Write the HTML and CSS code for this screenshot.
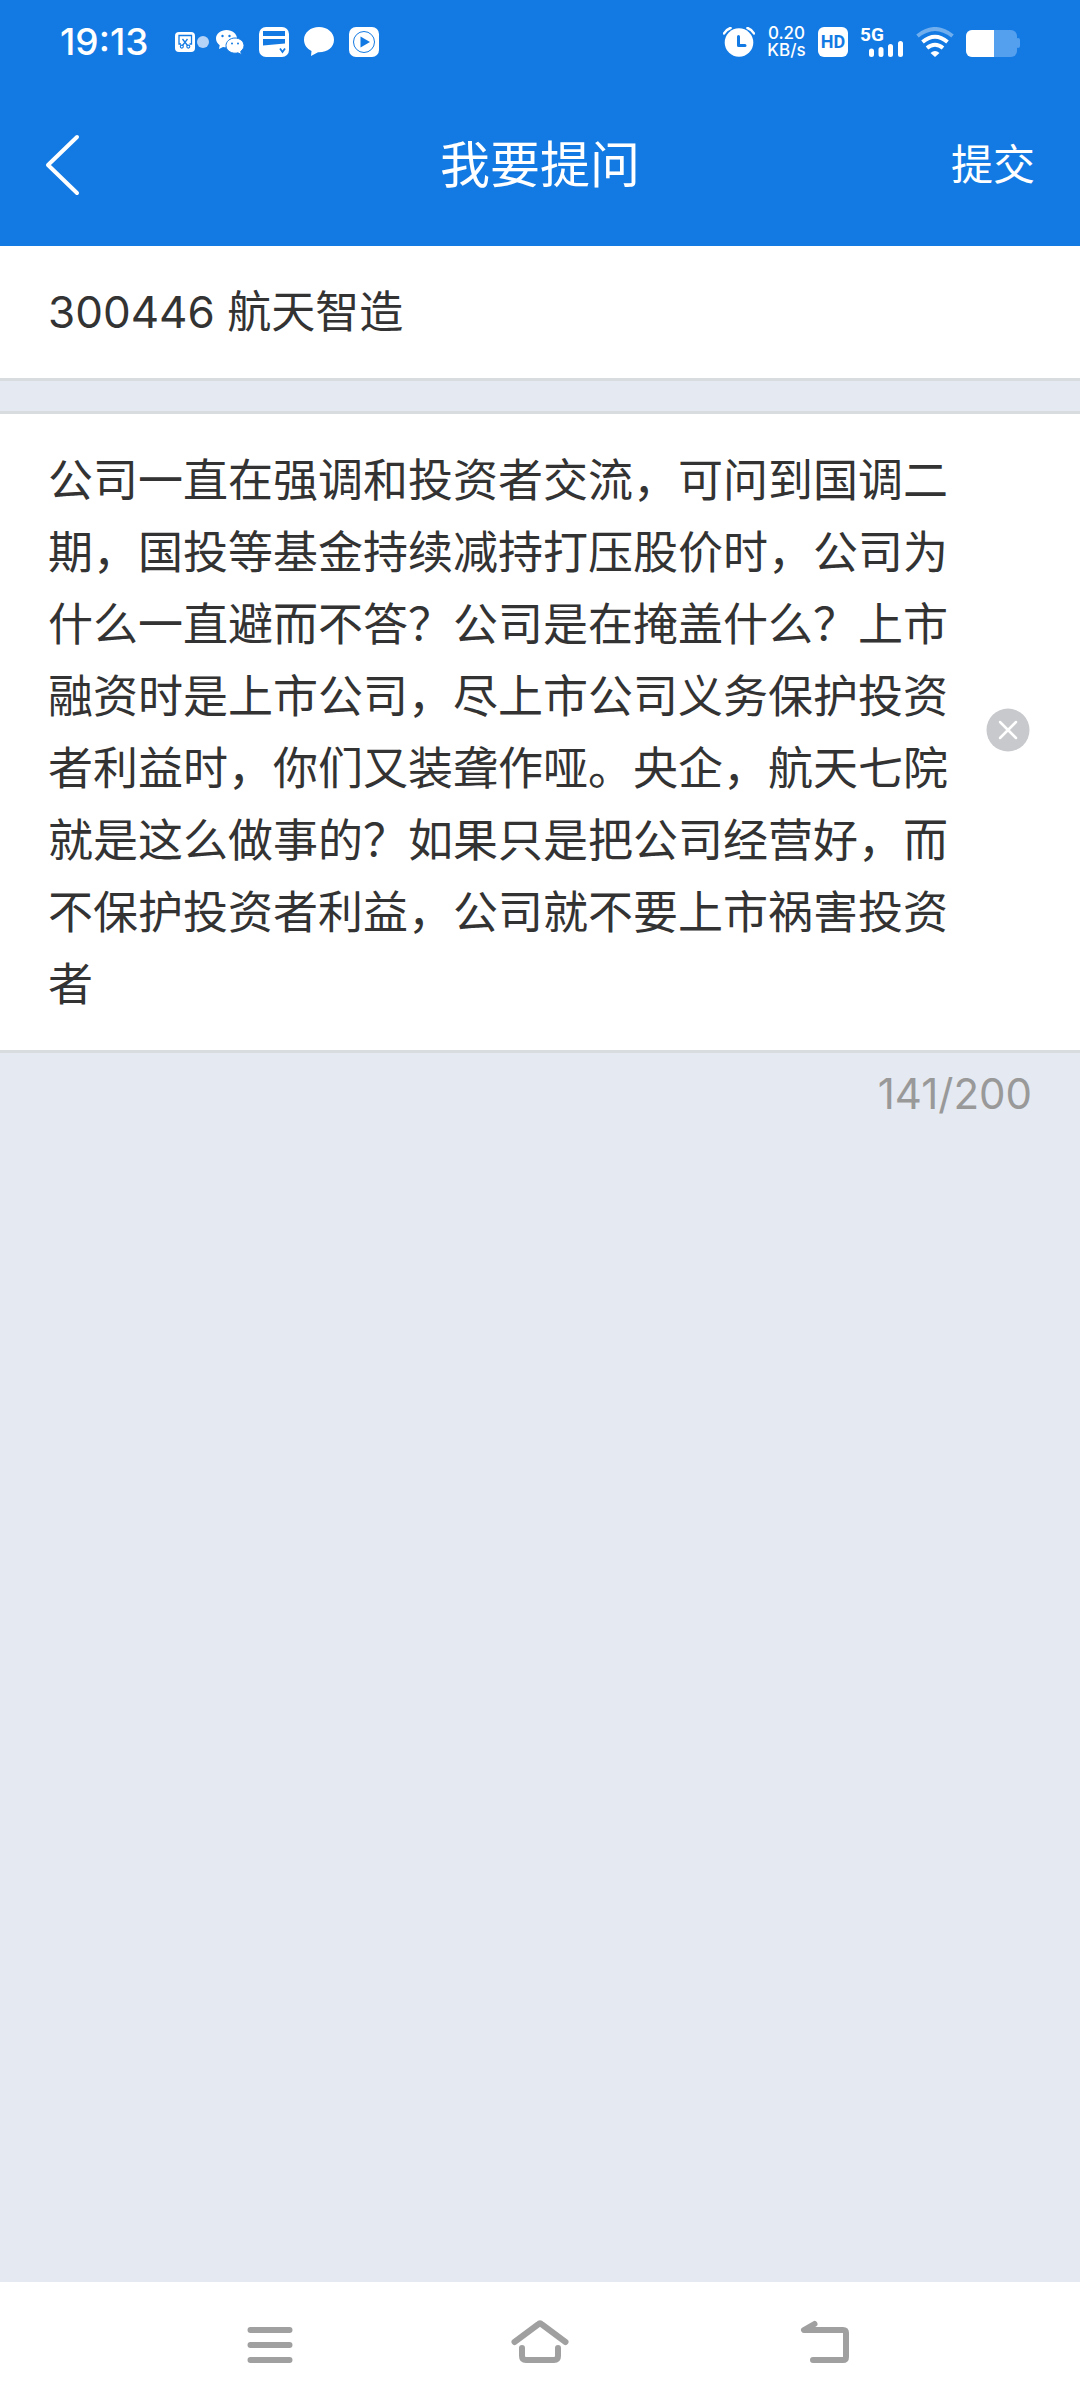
FILE: index.html
```html
<!DOCTYPE html>
<html lang="zh-CN">
<head>
<meta charset="utf-8">
<meta name="viewport" content="width=device-width, initial-scale=1">
<title>我要提问</title>
<link rel="stylesheet" href="styles.css">
</head>
<body>
<div class="screen">
  <div class="status">
    <div class="status-left">
      <span class="time">19:13</span>
      <div class="icon-pair">
        <svg width="34" height="30" viewBox="0 0 34 30" aria-hidden="true">
          <rect x="0" y="5" width="20" height="20" rx="4" fill="#fff"/>
          <path d="M6 17H4V8.500H16.500V17H14.500" fill="none" stroke="#137ae3" stroke-width="1.300"/>
          <path d="M7.500 12l5 6.500M12.500 12l-5 6.500" fill="none" stroke="#137ae3" stroke-width="1.300"/>
          <circle cx="6.800" cy="19.600" r="1.500" fill="none" stroke="#137ae3" stroke-width="1.100"/>
          <circle cx="13.300" cy="19.600" r="1.500" fill="none" stroke="#137ae3" stroke-width="1.100"/>
          <circle cx="28" cy="15" r="6" fill="#b5d3f6"/>
        </svg>
        <svg width="28" height="30" viewBox="0 0 28 30" aria-hidden="true">
          <path d="M10.500 3C4.700 3 0 6.800 0 11.600c0 2.700 1.400 5 3.700 6.600L3 22l4-2.100c1.200.4 2.300.4 3.500.4 5.800 0 10.500-3.900 10.500-8.700S16.300 3 10.500 3z" fill="#fff"/>
          <path d="M19 11c-5 0-9 3.400-9 7.600s4 7.600 9 7.600c1 0 2-.1 2.900-.4l3.600 1.800-.8-3.200c2-1.400 3.300-3.500 3.300-5.800C28 14.400 24 11 19 11z" fill="#fff" stroke="#137ae3" stroke-width="1"/>
          <g fill="#137ae3"><circle cx="6.500" cy="9" r="1.200"/><circle cx="13.500" cy="9" r="1.200"/><circle cx="16" cy="16.500" r="1"/><circle cx="22" cy="16.500" r="1"/></g>
        </svg>
      </div>
      <svg width="30" height="30" viewBox="0 0 30 30" aria-hidden="true">
        <rect width="30" height="30" rx="7" fill="#fff"/>
        <path d="M4 4h22v5H4zM4 12h22v4.500L4 18.500z" fill="#137ae3"/>
        <path d="M21 21.500l2.500 3.500 2.500-3.500" fill="none" stroke="#137ae3" stroke-width="1.800"/>
      </svg>
      <svg width="30" height="30" viewBox="0 0 30 30" aria-hidden="true">
        <path d="M15 0C6.700 0 0 5.500 0 12.700c0 5 3 9 7.500 11.300L7 29l7-3.800C23.300 25.600 30 20.300 30 12.700 30 5.500 23.300 0 15 0z" fill="#fff"/>
      </svg>
      <svg width="30" height="30" viewBox="0 0 30 30" aria-hidden="true">
        <rect width="30" height="30" rx="7" fill="#fff"/>
        <circle cx="15" cy="15" r="10.500" fill="none" stroke="#137ae3" stroke-width="1"/>
        <path d="M11.500 9.500v11l9.500-5.500z" fill="#137ae3"/>
      </svg>
    </div>
    <div class="status-right">
      <svg width="32" height="30" viewBox="0 0 32 30" aria-hidden="true">
        <circle cx="16" cy="15.500" r="14.300" fill="#fff"/>
        <path d="M1 6.500Q3 2.500 7.500 1M31 6.500Q29 2.500 24.500 1" fill="none" stroke="#fff" stroke-width="2.500" stroke-linecap="round"/>
        <path d="M15.500 9.500v9H22" fill="none" stroke="#137ae3" stroke-width="3" stroke-linecap="round" stroke-linejoin="round"/>
      </svg>
      <span class="speed"><span>0.20</span><span>KB/s</span></span>
      <span class="hd">HD</span>
      <svg class="signal" width="44" height="34" viewBox="0 -2 44 34">
        <text x="0" y="14">5G</text>
        <path d="M11.500 24v3.500M21 22.500v5M30.500 19.500v8M40.500 16.500v11" stroke="#fff" stroke-width="5" stroke-linecap="round"/>
      </svg>
      <svg width="38" height="30" viewBox="0 0 38 30" fill="none" aria-hidden="true">
        <path d="M1.500 9Q19-5 36.500 9" stroke="#70aeee" stroke-width="4"/>
        <path d="M6.500 15Q19 4.500 31.500 15" stroke="#fff" stroke-width="4"/>
        <path d="M11 21Q19 14.500 27 21" stroke="#fff" stroke-width="4"/>
        <path d="M14.500 26Q19 22 23.500 26L19 30z" fill="#fff"/>
      </svg>
      <svg width="54" height="30" viewBox="0 0 54 30" aria-hidden="true">
        <rect x="0" y="3" width="51" height="27" rx="6" fill="#549fee"/>
        <rect x="50" y="11" width="4" height="10" rx="2" fill="#549fee"/>
        <path d="M28 3H6a6 6 0 0 0-6 6v15a6 6 0 0 0 6 6h22z" fill="#fff"/>
      </svg>
    </div>
  </div>

  <header class="titlebar">
    <button class="back" type="button" aria-label="返回">
      <svg width="36" height="62" viewBox="0 0 36 62" fill="none" stroke="#fff" stroke-width="4" stroke-linecap="round" stroke-linejoin="round" aria-hidden="true"><path d="M32 3L3 31l29 28"/></svg>
    </button>
    <h1 class="title">我要提问</h1>
    <button class="submit" type="submit" form="ask">提交</button>
  </header>

  <form id="ask" class="form">
    <div class="stock">300446 航天智造</div>
    <div class="question">
      <textarea class="field" rows="8" maxlength="200" aria-label="问题内容" spellcheck="false">公司一直在强调和投资者交流，可问到国调二期，国投等基金持续减持打压股价时，公司为什么一直避而不答？公司是在掩盖什么？上市融资时是上市公司，尽上市公司义务保护投资者利益时，你们又装聋作哑。央企，航天七院就是这么做事的？如果只是把公司经营好，而不保护投资者利益，公司就不要上市祸害投资者</textarea>
      <button class="clear" type="button" aria-label="清空">
        <svg width="44" height="44" viewBox="0 0 44 44" aria-hidden="true"><circle cx="22" cy="22" r="21.500" fill="#c8c9cd"/><path d="M14 14l16 16M30 14L14 30" stroke="#fff" stroke-width="2.500" stroke-linecap="round"/></svg>
      </button>
    </div>
    <div class="count">141/200</div>
  </form>

  <nav class="keys" aria-label="系统导航">
    <button class="key" type="button" aria-label="最近任务">
      <svg width="96" height="48" viewBox="0 0 96 48" aria-hidden="true"><path d="M28.500 10h39M28.500 25h39M28.500 40h39"/></svg>
    </button>
    <button class="key" type="button" aria-label="主屏幕">
      <svg width="96" height="48" viewBox="0 0 96 48" aria-hidden="true"><path d="M22.500 22L46 4.500q2-2 4 0L73.500 22M30 28v8q0 4 4 4h28q4 0 4-4v-8"/></svg>
    </button>
    <button class="key" type="button" aria-label="返回上一页">
      <svg width="96" height="48" viewBox="0 0 96 48" aria-hidden="true"><path d="M52.500 4L42 10H81q3 0 3 3v24q0 3-3 3H51"/></svg>
    </button>
  </nav>
</div>
</body>
</html>
```
FILE: styles.css
```css
* {
  box-sizing: border-box;
}

body {
  margin: 0;
  font-family: Inter, "Noto Sans CJK SC", sans-serif;
  color: #333;
  background: #e5e9f1;
}

button {
  padding: 0;
  border: 0;
  background: none;
  font: inherit;
  color: inherit;
}

svg {
  display: block;
}

.screen {
  display: flex;
  flex-direction: column;
  min-height: 100vh;
}

/* Status bar */
.status {
  display: flex;
  justify-content: space-between;
  align-items: center;
  height: 84px;
  padding: 0 60px;
  background: #137ae3;
  color: #fff;
}

.status-left,
.status-right,
.icon-pair {
  display: flex;
  align-items: center;
}

.status-left {
  gap: 15px;
}

.status-right {
  gap: 12px;
}

.icon-pair {
  gap: 7px;
}

.time {
  width: 100px;
  font-size: 37px;
  line-height: 40px;
  font-weight: 500;
}

.speed {
  display: flex;
  flex-direction: column;
  align-items: center;
  width: 39px;
  font-size: 17px;
  line-height: 17px;
  font-weight: 500;
}

.hd {
  width: 30px;
  border-radius: 6px;
  background: #fff;
  color: #137ae3;
  font: 700 18px/30px Roboto, sans-serif;
  text-align: center;
}

.signal text {
  font: 700 19px Roboto, sans-serif;
  fill: #fff;
}

/* Title bar */
.titlebar {
  display: grid;
  grid-template-columns: 1fr auto 1fr;
  align-items: center;
  height: 162px;
  padding: 0 45px;
  background: #137ae3;
  color: #fff;
}

.back {
  justify-self: start;
}

.title {
  margin: 0;
  font-size: 50px;
  line-height: 72px;
  font-weight: 400;
}

.submit {
  justify-self: end;
  font-size: 42px;
  line-height: 72px;
}

/* Form */
.form {
  flex: 1;
}

.stock {
  padding: 30px 48px;
  border-bottom: 3px solid #d9dcdf;
  background: #fff;
  font-size: 44px;
  line-height: 72px;
}

.question {
  display: flex;
  align-items: center;
  gap: 30px;
  margin-top: 30px;
  padding: 28px 50px 32px 48px;
  border: solid #d9dcdf;
  border-width: 3px 0;
  background: #fff;
}

.field {
  flex: 1;
  min-width: 0;
  padding: 0;
  border: 0;
  outline: 0;
  resize: none;
  overflow: hidden;
  background: transparent;
  color: inherit;
  font-family: "Noto Sans CJK SC", sans-serif;
  font-size: 45px;
  line-height: 72px;
}

.count {
  padding: 8px 48px;
  color: #999;
  font-size: 42px;
  line-height: 66px;
  text-align: right;
}

/* System keys */
.keys {
  display: flex;
  justify-content: center;
  gap: 174px;
  padding: 38px 0 40px;
  background: #fff;
}

.key svg {
  fill: none;
  stroke: #a0a0a0;
  stroke-width: 6;
  stroke-linecap: round;
  stroke-linejoin: round;
}
```
